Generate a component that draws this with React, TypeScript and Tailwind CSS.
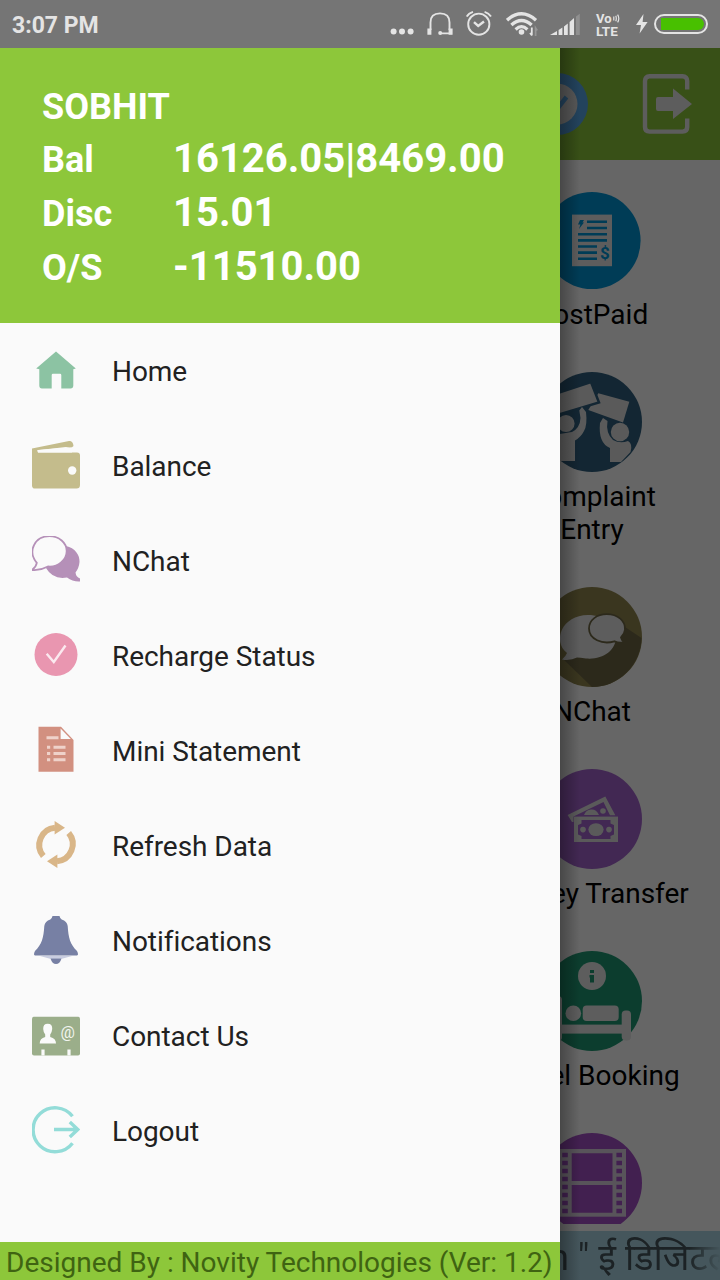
import type { ReactNode } from "react";

type MenuEntry = { label: string; icon: ReactNode };

const menuItems: MenuEntry[] = [
  {
    label: "Home",
    icon: (
      <path
        fill="#8cc3a3"
        d="M24 5.5 L43.8 22.5 L41.3 23.3 V39.5 Q41.3 42.4 38.5 42.4 H29.3 V29 Q29.3 27.8 28 27.8 H21 Q19.7 27.8 19.7 29 V42.4 H10 Q7.3 42.4 7.3 39.5 V23.3 L4.2 22.5 Z"
      />
    ),
  },
  {
    label: "Balance",
    icon: (
      <>
        <path fill="#c4bc8c" d="M0 7.5 L37 0 Q41 -0.4 41.5 5 L40 6.2 L6 9 L6 11.4 H45 Q48 11.4 48 14.5 V44 Q48 47.6 44.5 47.6 H3 Q0 47.6 0 44.5 Z" />
        <path fill="#fafafa" d="M5 9.3 L34 6 L40 7.5 V11.4 H6 Z" />
        <circle cx="40.2" cy="29.5" r="4.2" fill="#fafafa" />
      </>
    ),
  },
  {
    label: "NChat",
    icon: (
      <>
        <path fill="#b590b8" d="M34 10 C43 12 48 19 47.5 26 Q47 32 43.5 36.5 Q44 41 48 42.5 V45.5 Q41 46 35 41.5 Q21 44 14 32 Z" />
        <path
          fill="#fafafa"
          stroke="#b590b8"
          strokeWidth="1.8"
          d="M17.5 0.2 C27 0.2 34.7 6.7 34.7 15 C34.7 24 26 31.5 16 30.5 Q8 34.8 0 34 Q4 31 4.8 26.8 C-5 15 3 0.2 17.5 0.2 Z"
        />
      </>
    ),
  },
  {
    label: "Recharge Status",
    icon: (
      <>
        <circle cx="24" cy="23.5" r="21.5" fill="#e996b0" />
        <path fill="none" stroke="#fbe9ef" strokeWidth="2.4" d="M14.7 22.8 L21.8 31 L33.5 14.5" />
      </>
    ),
  },
  {
    label: "Mini Statement",
    icon: (
      <>
        <path fill="#d29080" d="M6.5 0.8 H29 L41.5 14 V45.8 H6.5 Z" />
        <path fill="#fafafa" d="M28.6 2.5 V13 H38.8 Z" />
        <path
          stroke="#efd2ca"
          strokeWidth="3"
          d="M14.5 11.8 H26.5 M15 21.2 H18.2 M21.5 21.2 H33.5 M15 27.5 H18.2 M21.5 27.5 H33.5 M15 33.8 H18.2 M21.5 33.8 H33.5"
        />
      </>
    ),
  },
  {
    label: "Refresh Data",
    icon: (
      <g fill="none" stroke="#d9b688" strokeWidth="6">
        <path d="M11.3 35 A17.3 17.3 0 0 1 23 6.7" />
        <path fill="#d9b688" stroke="none" d="M22.6 0 L33 6.8 L22.6 13.4 Z" />
        <path d="M36.7 12 A17.3 17.3 0 0 1 25 40.3" />
        <path fill="#d9b688" stroke="none" d="M25.4 47 L15 40.2 L25.4 33.6 Z" />
      </g>
    ),
  },
  {
    label: "Notifications",
    icon: (
      <>
        <path
          fill="#7780a4"
          d="M18.3 3.5 Q20 2.5 20.5 0 H27.5 Q28 2.5 29.7 3.5 Q35 5 35.7 10 C36.5 22 38 28 45 35 Q47 39 45 39.6 H3 Q1 39 3 35 C10 28 11.5 22 12.3 10 Q13 5 18.3 3.5 Z"
        />
        <path fill="#c9cde0" d="M8 40 H40 L30 42.8 H18 Z" />
        <path fill="#7780a4" d="M18.5 42.5 H29.5 Q27.8 48 24 48 Q20.2 48 18.5 42.5 Z" />
      </>
    ),
  },
  {
    label: "Contact Us",
    icon: (
      <>
        <rect x="0" y="5.8" width="48" height="38.6" rx="2" fill="#9bae8a" />
        <path
          fill="#fafafa"
          d="M15.7 12.8 Q20.5 12.8 20.2 18 Q19.8 22 18.2 23.5 V26 Q24 27.5 24 32.4 H7.7 Q7.7 27.5 13.2 26 V23.5 Q11.5 22 11.2 18 Q11 12.8 15.7 12.8 Z"
        />
        <text x="35.8" y="27" textAnchor="middle" fontSize="16" fill="#f2f5ef">@</text>
        <path stroke="#fafafa" strokeWidth="3.2" d="M11 38.4 V44.6 M37 38.4 V44.6" />
      </>
    ),
  },
  {
    label: "Logout",
    icon: (
      <g fill="none" stroke="#93dcd8" strokeWidth="3.4">
        <path d="M40.5 10.3 A22 22 0 1 0 40.5 37.2" />
        <path d="M22 23.5 H45.5 M37.8 16 L45.8 23.5 L37.8 31" />
      </g>
    ),
  },
];

const services: MenuEntry[] = [
  {
    label: "PostPaid",
    icon: (
      <>
        <circle cx="50" cy="50.5" r="48.6" fill="#0096d8" />
        <rect x="30" y="24.6" width="40" height="51.6" fill="#e8e8e8" />
        <path stroke="#0096d8" strokeWidth="2.6" d="M45 31.7 H65 M45 38 H65 M36 44.2 H65 M36 50.4 H65 M36 56.5 H55 M36 62.6 H55 M36 68.8 H55" />
        <path fill="#0096d8" d="M38 30 H42 L40.5 32.6 H42 L37 39 L38.4 34.6 H36 Z" />
        <text x="63" y="69.2" textAnchor="middle" fontSize="17" fontWeight="700" fill="#0096d8">$</text>
      </>
    ),
  },
  {
    label: "Complaint Entry",
    icon: (
      <>
        <circle cx="50" cy="50" r="50" fill="#30607f" />
        <g fill="#e2e2e2">
          <path d="M56.3 21.3 L87.3 29.8 L81 50.6 L46.3 38 Z" />
          <path stroke="#30607f" strokeWidth="2.5" d="M8 23.5 L49 10 L57 30.5 L12 44 Z" />
          <circle cx="24" cy="51.5" r="9.6" stroke="#30607f" strokeWidth="2" />
          <circle cx="78" cy="60" r="9.2" />
          <path d="M37.3 38.5 L40 35 L44 40 Q45.5 53 42 59 Q39 65 33 68.5 V89 H12 V63 Q24 61 30 60 Q38 56 38.5 46 Z" />
          <path d="M58 51 L61 46 L65.5 49 Q63.5 61 71 68 Q78 72 86 69 Q91 72 88.5 80 L79 90 H68 V76 Q56 71 58 51 Z" />
        </g>
      </>
    ),
  },
  {
    label: "NChat",
    icon: (
      <>
        <circle cx="50" cy="50" r="50" fill="#92874f" />
        <path fill="#6f6845" d="M80 38 L99.5 51 A50 50 0 0 1 50 100 L21 72 L40 60 Z" />
        <path fill="#e8e8e8" d="M46 28 C62 28 74 38 74 50 C74 64 60 73 44 71.5 Q38 70.5 35 70.5 Q28 74 20 72.4 Q24 69 25 66 C10 54 20 28 46 28 Z" />
        <path
          fill="#e8e8e8"
          stroke="#6f6845"
          strokeWidth="1.8"
          d="M64.7 27.2 C76 27.2 83.5 34 83 42.5 Q82.5 47 79 50.5 Q79.5 53 82.5 55.3 Q77 56.5 72.5 54.3 C60 58 47 52 47 41.5 C47 33 55 27.2 64.7 27.2 Z"
        />
      </>
    ),
  },
  {
    label: "Money Transfer",
    icon: (
      <>
        <circle cx="50" cy="50" r="50" fill="#a565cf" />
        <path fill="#e2e2e2" d="M25.6 46 L63.3 27.6 L73.3 46.2 H68 L61.5 33 L31.5 47.5 V53 H30 Z" />
        <path fill="#e2e2e2" d="M42 46 Q44 41 49 40.6 Q54 40 57 46 Z" />
        <circle cx="61" cy="42" r="2.8" fill="#e2e2e2" />
        <rect x="32" y="47.6" width="44" height="25.4" fill="#e2e2e2" />
        <path fill="#a565cf" d="M39.5 51 H68.5 V54.5 L72 56 V65.5 L68.5 67 V70 H39.5 V67 L36 65.5 V56 L39.5 54.5 Z" />
        <ellipse cx="54" cy="60.6" rx="7.6" ry="6.4" fill="#e2e2e2" />
        <circle cx="41" cy="60.6" r="2.8" fill="#e2e2e2" />
        <circle cx="67" cy="60.6" r="2.8" fill="#e2e2e2" />
      </>
    ),
  },
  {
    label: "Hotel Booking",
    icon: (
      <>
        <circle cx="50" cy="50" r="50" fill="#1f9a74" />
        <circle cx="50" cy="25" r="14" fill="#e8e8e8" />
        <path fill="#1f9a74" d="M48 19 H52 V22 H48 Z M47.5 24 H52 V31.5 H48 V26.5 H47.5 Z" />
        <g fill="#e8e8e8">
          <circle cx="31.3" cy="62.3" r="7.8" />
          <rect x="40.7" y="54.6" width="36" height="15.4" rx="4" />
          <rect x="11" y="73.6" width="72" height="9" />
          <rect x="11" y="45" width="9" height="45" rx="4" />
          <rect x="79.7" y="59.6" width="9.3" height="30" rx="4" />
        </g>
      </>
    ),
  },
  {
    label: "Movies",
    icon: (
      <>
        <circle cx="50" cy="50" r="50" fill="#a650c8" />
        <rect x="16" y="16" width="68" height="67.7" fill="#dcd2e2" />
        <path fill="#a650c8" d="M29.7 20.3 H70.5 V48 H29.7 Z M29.7 52 H70.5 V79.7 H29.7 Z" />
        <path stroke="#a650c8" strokeWidth="5.6" strokeDasharray="4.4 3.6" d="M23 19.8 V81 M77.2 19.8 V81" />
      </>
    ),
  },
];

const account = [
  { label: "Bal", value: "16126.05|8469.00" },
  { label: "Disc", value: "15.01" },
  { label: "O/S", value: "-11510.00" },
];

function StatusBar() {
  return (
    <div className="flex h-12 items-center bg-[#757575] pr-3 pl-3 text-[#e4e4e4]">
      <span className="mt-[2px] flex-1 text-[23px] leading-none font-bold">3:07 PM</span>
      <svg className="mr-[13px] h-12 w-6" viewBox="0 0 24 48" fill="currentColor">
        <circle cx="3.6" cy="31.5" r="3" />
        <circle cx="12" cy="31.5" r="3" />
        <circle cx="20.6" cy="31.5" r="3" />
      </svg>
      <svg className="mr-[13px] h-12 w-[26px]" viewBox="0 0 26 48" fill="none" stroke="currentColor">
        <path strokeWidth="1.9" d="M3.5 30 V22.5 Q3.5 13.4 13 13.4 Q22.5 13.4 22.5 22.5 V30 M25 33.4 H13" />
        <path strokeWidth="4" d="M2.4 28.5 V34.7 M23.6 28.5 V34.7" />
        <circle cx="13.2" cy="33" r="2" fill="currentColor" stroke="none" />
      </svg>
      <svg className="mr-[14px] h-12 w-[26px]" viewBox="0 0 26 48" fill="none" stroke="currentColor" strokeWidth="1.9">
        <circle cx="12.8" cy="24.2" r="10.6" />
        <path d="M0.8 16.6 Q2.5 13.2 7 11.8 M25 16.6 Q23 13.2 18.6 11.8" />
        <path strokeWidth="2.4" d="M8 22.2 L12.2 26 L18 21.5" />
      </svg>
      <svg className="mr-3 h-12 w-8" viewBox="0 0 32 48" fill="none" stroke="currentColor">
        <path strokeWidth="3.4" d="M1 20.2 Q15.5 7.5 30 20.2" />
        <path strokeWidth="3.4" d="M5.4 25 Q15.5 16 25.6 25" />
        <path strokeWidth="3.2" d="M9.6 29.5 Q15.5 23.8 21.4 29.5" />
        <circle cx="15.5" cy="32" r="2.8" fill="currentColor" stroke="none" />
        <path strokeWidth="1.8" d="M25.8 27.5 V35.5 M24 33 L26 35.5" />
        <path stroke="#969696" strokeWidth="1.8" d="M29.6 36 V28 L31.2 30.5" />
      </svg>
      <svg className="mr-4 h-12 w-[30px]" viewBox="0 0 30 48" fill="currentColor">
        <path d="M0 35 L7 31 V35 Z M8.6 30 L12.4 27.6 V35 H8.6 Z M14 26.4 L17.8 23.6 V35 H14 Z M19.6 22 L24 18 V35 H19.6 Z" />
        <path fill="#909090" d="M26 16.5 L29.8 13.8 V35 H26 Z" />
      </svg>
      <div className="mr-4 flex w-6 flex-col pt-[1px] text-[13px] leading-[12px] font-bold">
        <span className="flex items-center">
          Vo
          <svg className="ml-[1px] h-[9px] w-[7px]" viewBox="0 0 7 9" fill="none" stroke="currentColor" strokeWidth="1.2">
            <path d="M0.8 2.5 V6.5 M2.8 1.8 Q3.8 4.5 2.8 7.2 M4.6 0.6 Q7 4.5 4.6 8.4" />
          </svg>
        </span>
        <span className="text-[13.5px]">LTE</span>
      </div>
      <svg className="mr-[6px] h-12 w-3" viewBox="0 0 12 48" fill="currentColor">
        <path d="M7.5 14 L0 25 H5 L3.6 33.5 L11.6 22 H6.6 Z" />
      </svg>
      <div className="flex h-5 w-[54px] items-center rounded-full border-2 border-[#e4e4e4] pr-[2px] pl-[5px]">
        <div className="h-3 w-full rounded-l-[2px] rounded-r-full bg-[#48c000]" />
      </div>
    </div>
  );
}

function AppBar() {
  return (
    <header className="flex h-28 shrink-0 items-center justify-end bg-[#8dc73a] pr-7">
      <svg className="mr-[54px] size-[62px]" viewBox="0 0 62 62">
        <circle cx="31" cy="31" r="31" fill="#58a8e8" />
        <circle cx="31" cy="31" r="20.5" fill="#dcdcdc" />
        <path fill="none" stroke="#58a8e8" strokeWidth="4.5" d="M20 33 L28 40 L40.5 24" />
      </svg>
      <svg className="h-[60px] w-[50px]" viewBox="0 0 50 60">
        <path fill="none" stroke="#e8e8e8" strokeWidth="4.4" d="M45.2 15.5 V7 Q45.2 2.3 40.5 2.3 H7.5 Q3 2.3 3 7 V53 Q3 57.6 7.5 57.6 H40.5 Q45.2 57.6 45.2 53 V44.5" />
        <path fill="#e8e8e8" d="M16 23 H31 V14.5 L50 30 L31 45 V37 H16 Q14 37 14 35 V25 Q14 23 16 23 Z" />
      </svg>
    </header>
  );
}

function ServiceList() {
  return (
    <main className="mb-[7px] flex flex-1 flex-col items-end overflow-hidden pt-[30px]">
      {services.map((service) => (
        <div key={service.label} className="flex w-64 shrink-0 flex-col items-center pb-[41px]">
          <svg className="size-[100px]" viewBox="0 0 100 100">
            {service.icon}
          </svg>
          <span className="mt-2 w-[200px] text-center text-[28px] leading-[33px] text-black">
            {service.label === "Complaint Entry" ? (
              <>
                Complaint
                <br />
                Entry
              </>
            ) : (
              service.label
            )}
          </span>
        </div>
      ))}
    </main>
  );
}

function Drawer() {
  return (
    <aside className="absolute top-12 bottom-0 left-0 flex w-[560px] flex-col bg-[#fafafa]">
      <div className="h-[275px] bg-[#8dc73a] pt-8 pl-[42px] font-bold text-white">
        <div className="h-[52px] text-[36px] leading-[54px]">SOBHIT</div>
        {account.map((row) => (
          <div key={row.label} className="flex h-[54px] items-center">
            <span className="w-[131px] pt-[2px] text-[36px] leading-none">{row.label}</span>
            <span className="text-[40px] leading-none">{row.value}</span>
          </div>
        ))}
      </div>
      <nav className="flex-1">
        {menuItems.map((item) => (
          <a key={item.label} className="flex h-[95px] items-center pl-8 text-[28px] text-[#212121]">
            <svg className="mr-8 mb-[1px] size-12" viewBox="0 0 48 48">
              {item.icon}
            </svg>
            <span className="pt-[2px] leading-none tracking-[-0.05px]">{item.label}</span>
          </a>
        ))}
      </nav>
      <footer className="flex h-[38px] items-center bg-[#8dc73a] pt-[3px] pl-[6px] text-[28px] leading-none whitespace-nowrap text-[#3f6412]">
        Designed By : Novity Technologies (Ver: 1.2)
      </footer>
    </aside>
  );
}

export default function App() {
  return (
    <div className="relative h-[1280px] w-[720px] overflow-hidden bg-white font-[Roboto,'Noto_Sans',sans-serif]">
      <StatusBar />
      <div className="flex h-[1232px] flex-col">
        <AppBar />
        <ServiceList />
        <div className="flex h-[49px] shrink-0 items-center bg-[#add8e6] pl-[549px] text-[36px] leading-none whitespace-nowrap text-[#46565c]">
          <span className="mask-r-from-[140px] mask-r-to-[172px] w-[171px] overflow-hidden pt-[5px] leading-[49px]">n " ई डिजिटल</span>
        </div>
      </div>

      {/* Scrim and drawer edge shadow */}
      <div className="absolute inset-x-0 top-12 bottom-0 bg-black/60" />
      <div className="absolute top-12 bottom-0 left-[560px] w-5 bg-linear-to-r from-black/30 to-transparent" />
      <Drawer />
    </div>
  );
}
